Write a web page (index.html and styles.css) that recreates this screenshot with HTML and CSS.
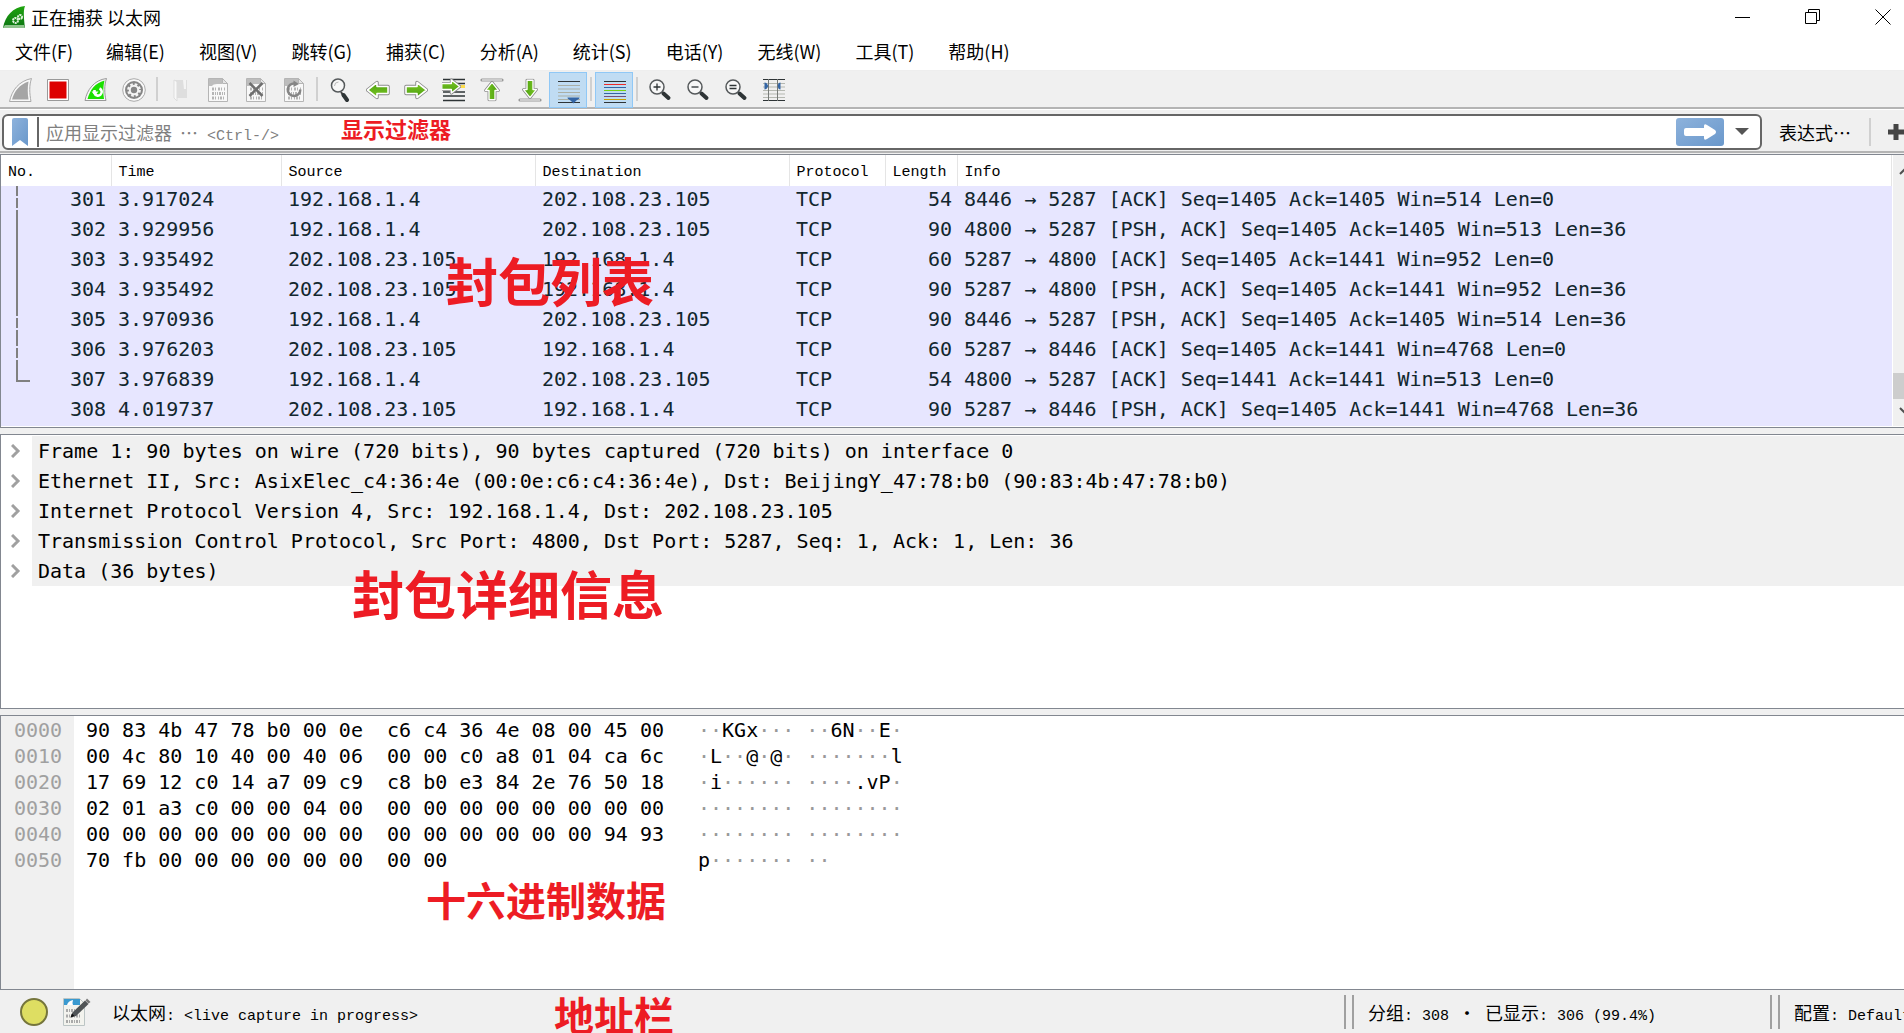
FILE: index.html
```html
<!DOCTYPE html>
<html lang="zh-CN">
<head>
    <meta charset="UTF-8">
    <meta name="viewport" content="width=device-width, initial-scale=1.0">
    <title>正在捕获 以太网</title>
    <link rel="stylesheet" href="styles.css">
</head>
<body>
    <!-- shared icon shapes -->
    <svg class="defs" width="0" height="0" aria-hidden="true">
        <defs>
            <linearGradient id="greenFin" x1="0" y1="0" x2="0" y2="1">
                <stop offset="0" stop-color="#1fa50f"/>
                <stop offset="1" stop-color="#0c7413"/>
            </linearGradient>
            <linearGradient id="greenArrow" x1="0" y1="0" x2="0" y2="1">
                <stop offset="0" stop-color="#7cc727"/>
                <stop offset="1" stop-color="#4a9e0c"/>
            </linearGradient>
            <linearGradient id="blueFill" x1="0" y1="0" x2="1" y2="1">
                <stop offset="0" stop-color="#8db2dc"/>
                <stop offset="1" stop-color="#6a98cb"/>
            </linearGradient>
            <symbol id="arrow" viewBox="0 0 24 24">
                <path d="M2 8.500h11V4.500l9.500 7.500-9.500 7.500v-4H2z" fill="none" stroke="#8b8b8b" stroke-width="3.500" stroke-linejoin="round"/>
                <path d="M2 8.500h11V4.500l9.500 7.500-9.500 7.500v-4H2z" fill="url(#greenArrow)" stroke="#fff" stroke-width="1.600" stroke-linejoin="round"/>
            </symbol>
            <symbol id="lens" viewBox="0 0 24 24">
                <path d="M13 13l3 3" stroke="#444" stroke-width="2"/>
                <path d="M15.500 15.500l5 4.500" stroke="#2e3436" stroke-width="4" stroke-linecap="round"/>
                <circle cx="9" cy="9" r="7" fill="#f7f7f7" stroke="#55595b" stroke-width="1.500"/>
            </symbol>
            <symbol id="page" viewBox="0 0 24 24">
                <path d="M2.500 .5h14l5 5v18h-19z" fill="#f8f8f8" stroke="#b5b5b5"/>
                <path d="M3 1h13v5H11q-4 0-5 2H3z" fill="#bdbdbd"/>
                <path d="M16.500 .5v5h5z" fill="#e4e4e4" stroke="#b5b5b5"/>
                <path d="M6 11h13" stroke="#b5b5b5" stroke-width="3" stroke-dasharray="2 1 1 2"/>
                <path d="M6 15.500h13" stroke="#b5b5b5" stroke-width="3" stroke-dasharray="2 1 1 1 1 1"/>
                <path d="M6 20h13" stroke="#b5b5b5" stroke-width="3" stroke-dasharray="2 1 1 2 1 1"/>
            </symbol>
        </defs>
    </svg>

    <div class="window">
        <header class="titlebar">
            <svg class="app-icon" viewBox="0 0 24 24">
                <path d="M1 23C3 11 11 2 23 1c-2 5-1 13 0 22z" fill="url(#greenFin)"/>
                <path d="M1 23c1-2 2-3 2-3h19l1 3z" fill="#8fc48d"/>
                <g fill="none" stroke="#dff3dc" stroke-width="2" stroke-dasharray="2 .6">
                    <circle cx="13.500" cy="15.500" r="2.500"/>
                    <circle cx="18" cy="12" r="2"/>
                </g>
            </svg>
            <h1>正在捕获 以太网</h1>
            <div class="window-controls">
                <button type="button" aria-label="最小化"><svg width="16" height="16"><path d="M0 8.500h15"/></svg></button>
                <button type="button" aria-label="还原"><svg width="16" height="16"><path d="M.5 3.500h11v11H.5zM3.500 3.500v-3h11v11h-3"/></svg></button>
                <button type="button" aria-label="关闭"><svg width="16" height="16"><path d="M.5.5l15 15M15.500.5l-15 15"/></svg></button>
            </div>
        </header>

        <nav class="menubar">
            <button type="button">文件(F)</button>
            <button type="button">编辑(E)</button>
            <button type="button">视图(V)</button>
            <button type="button">跳转(G)</button>
            <button type="button">捕获(C)</button>
            <button type="button">分析(A)</button>
            <button type="button">统计(S)</button>
            <button type="button">电话(Y)</button>
            <button type="button">无线(W)</button>
            <button type="button">工具(T)</button>
            <button type="button">帮助(H)</button>
        </nav>

        <div class="toolbar">
            <button type="button" aria-label="开始捕获">
                <svg viewBox="0 0 24 24"><path d="M1.500 23.500C4 12 11 3 23.500 .5c-2.500 7-2 15-.5 23z" fill="#f8f8f8" stroke="#aaa"/><path d="M4 21.500C6.500 13 11.500 6.500 20.500 3.500c-1 6-1 12 0 18z" fill="#a5a5a5"/></svg>
            </button>
            <button type="button" aria-label="停止捕获">
                <svg viewBox="0 0 24 24"><path d="M1.500 1.500h21v21h-21z" fill="#fff" stroke="#999"/><path d="M3.500 3.500h17v17h-17z" fill="#d00"/></svg>
            </button>
            <button type="button" aria-label="重新开始捕获">
                <svg viewBox="0 0 24 24"><path d="M1 22.500C3 12 10 2 22.500.5c-2.500 7-2 15-.5 22z" fill="#f8f8f8" stroke="#999"/><path d="M3.500 21C6 12 11 5 20.500 2.500c-1.500 6-1.500 12-.5 18.500z" fill="#1be000"/><path d="M10.500 12v3a3.700 3.700 0 1 0 5-4.500" fill="none" stroke="#fff" stroke-width="2.600"/><path d="M7.500 13.500h7l-3.500 4z" fill="#fff"/></svg>
            </button>
            <button type="button" aria-label="捕获选项">
                <svg viewBox="0 0 24 24"><circle cx="12" cy="12" r="11.300" fill="#fafafa" stroke="#aaa"/><circle cx="12" cy="12" r="9" fill="#868686"/><circle cx="12" cy="12" r="5.700" fill="none" stroke="#f4f4f4" stroke-width="2.400" stroke-dasharray="2.600 1.877"/><circle cx="12" cy="12" r="4.200" fill="none" stroke="#f4f4f4" stroke-width="2"/></svg>
            </button>
            <span class="separator"></span>
            <button type="button" aria-label="打开">
                <svg viewBox="0 0 24 24"><path d="M6 2h13v18H8z" fill="#dedede"/><path d="M6 2l3 1.500V23l-3-3z" fill="#f8f8f8" stroke="#ddd"/><path d="M15 2h3v9h-2z" fill="#f4f4f4"/></svg>
            </button>
            <button type="button" aria-label="保存"><svg viewBox="0 0 24 24"><use href="#page"/></svg></button>
            <button type="button" aria-label="关闭文件">
                <svg viewBox="0 0 24 24"><use href="#page"/><path d="M5.500 5l13 13M18.500 5l-13 13" stroke="#6e6e6e" stroke-width="2.500"/></svg>
            </button>
            <button type="button" aria-label="重新加载">
                <svg viewBox="0 0 24 24"><use href="#page"/><path d="M13 5.500a6.300 6.300 0 1 0 5.300 6" fill="none" stroke="#858585" stroke-width="2.500"/><path d="M11.500 2.500v6.500l5.500-3z" fill="#858585"/></svg>
            </button>
            <span class="separator"></span>
            <button type="button" aria-label="查找">
                <svg viewBox="0 0 24 24"><path d="M13 14l2 3" stroke="#444" stroke-width="2"/><path d="M15.500 17l3.500 5" stroke="#2e3436" stroke-width="4" stroke-linecap="round"/><circle cx="10" cy="7.500" r="6.500" fill="#f7f7f7" stroke="#55595b" stroke-width="1.500"/><path d="M6.500 8a4 4 0 0 1 4-4" fill="none" stroke="#bbb"/></svg>
            </button>
            <button type="button" aria-label="上一个分组"><svg class="turn-left" viewBox="0 0 24 24"><use href="#arrow"/></svg></button>
            <button type="button" aria-label="下一个分组"><svg viewBox="0 0 24 24"><use href="#arrow"/></svg></button>
            <button type="button" aria-label="转到分组">
                <svg viewBox="0 0 24 24"><path d="M1 1.500h22M1 5.500h22M1 14h22M1 18h22M1 22.500h22" stroke="#2e3436" stroke-width="1.300"/><path d="M17 7h6v3h-6z" fill="#fcdc4c"/><svg x="-2" y="-2" width="21" height="21"><use href="#arrow"/></svg></svg>
            </button>
            <button type="button" aria-label="首个分组">
                <svg viewBox="0 0 24 24"><path d="M2 2h20" stroke="#999" stroke-width="3.200" stroke-linecap="round"/><path d="M2 2h20" stroke="#fff"/><g transform="matrix(0 -.85 .85 0 1.800 23.500)"><use href="#arrow" width="24" height="24"/></g></svg>
            </button>
            <button type="button" aria-label="最新分组">
                <svg viewBox="0 0 24 24"><path d="M2 22h20" stroke="#999" stroke-width="3.200" stroke-linecap="round"/><path d="M2 22h20" stroke="#fff"/><g transform="matrix(0 .85 -.85 0 22.200 .5)"><use href="#arrow" width="24" height="24"/></g></svg>
            </button>
            <button type="button" class="checked" aria-label="自动滚动" aria-pressed="true">
                <svg viewBox="0 0 24 24"><path d="M1 1.500h22M1 22.500h22" stroke="#2e3436"/><path d="M1 5.500h22M1 9h22M1 12.500h22M1 16h22M1 19.500h22" stroke="#aaafa6"/><path d="M10.500 17.500h12c0 2-3 2-6 6-3-4-6-4-6-6z" fill="#3465a4"/></svg>
            </button>
            <span class="separator"></span>
            <button type="button" class="checked" aria-label="着色" aria-pressed="true">
                <svg viewBox="0 0 24 24"><path d="M1 1.500h22M1 22.500h22" stroke="#2e3436"/><path d="M1 4.500h22" stroke="#ef2929"/><path d="M1 7.500h22" stroke="#3465a4"/><path d="M1 10.500h22" stroke="#73d216"/><path d="M1 13.500h22" stroke="#3465a4"/><path d="M1 16.500h22" stroke="#75507b"/><path d="M1 19.500h22" stroke="#c4a000"/></svg>
            </button>
            <span class="separator"></span>
            <button type="button" aria-label="放大"><svg viewBox="0 0 24 24"><use href="#lens"/><path d="M5.500 9h7M9 5.500v7" stroke="#2e3436" stroke-width="1.300"/></svg></button>
            <button type="button" aria-label="缩小"><svg viewBox="0 0 24 24"><use href="#lens"/><path d="M5.500 9h7" stroke="#2e3436" stroke-width="1.300"/></svg></button>
            <button type="button" aria-label="正常大小"><svg viewBox="0 0 24 24"><use href="#lens"/><path d="M5.500 7.500h7M5.500 10.500h7" stroke="#2e3436" stroke-width="1.300"/></svg></button>
            <button type="button" aria-label="调整列宽">
                <svg viewBox="0 0 24 24"><path d="M1 1.500h22M1 22.500h22" stroke="#2e3436"/><path d="M1 5.500h22M1 9h22M1 12.500h22M1 16h22M1 19.500h22" stroke="#b5b8b1"/><path d="M6.500 1v22M15.500 1v22" stroke="#777b78"/><path d="M2.500 4.500c3 0 3 3 4 3.500-1 .5-1 3.500-4 3.500zM18.500 4.500c-3 0-2 3-3 3.500 1 .5 0 3.500 3 3.500z" fill="#3465a4"/></svg>
            </button>
        </div>

        <div class="filterbar">
            <form class="filter">
                <button type="button" class="bookmark" aria-label="书签"><svg width="16" height="28"><path d="M2 0h12a2 2 0 0 1 2 2v26l-8-6-8 6V2a2 2 0 0 1 2-2z" fill="url(#blueFill)"/></svg></button>
                <div class="filter-field">
                    <input type="text" id="filter" autocomplete="off">
                    <label for="filter">应用显示过滤器 <span class="dots">…</span> <span class="latin">&lt;Ctrl-/&gt;</span></label>
                    <strong class="note note-small">显示过滤器</strong>
                </div>
                <button type="submit" class="apply" aria-label="应用"><svg width="48" height="28"><path d="M10 10h18V8q0-3 3-1l8 5q2 2 0 4l-8 5q-3 2-3-1v-2H10q-2 0-2-2v-4q0-2 2-2z" fill="#fff"/></svg></button>
                <button type="button" class="history" aria-label="历史"><svg width="14" height="8"><path d="M0 0h14L7 7z" fill="#555"/></svg></button>
            </form>
            <button type="button" class="expression">表达式…</button>
            <span class="separator"></span>
            <button type="button" class="add" aria-label="添加"><svg width="16" height="16"><path d="M0 8h16M8 0v16" stroke="#444" stroke-width="5"/></svg></button>
        </div>

        <section class="pane packets">
            <table>
                <colgroup>
                    <col class="c-no"><col class="c-time"><col class="c-addr"><col class="c-addr"><col class="c-proto"><col class="c-len"><col>
                </colgroup>
                <thead>
                    <tr><th>No.</th><th>Time</th><th>Source</th><th>Destination</th><th>Protocol</th><th>Length</th><th>Info</th></tr>
                </thead>
                <tbody>
                    <tr><td>301</td><td>3.917024</td><td>192.168.1.4</td><td>202.108.23.105</td><td>TCP</td><td>54</td><td>8446 → 5287 [ACK] Seq=1405 Ack=1405 Win=514 Len=0</td></tr>
                    <tr><td>302</td><td>3.929956</td><td>192.168.1.4</td><td>202.108.23.105</td><td>TCP</td><td>90</td><td>4800 → 5287 [PSH, ACK] Seq=1405 Ack=1405 Win=513 Len=36</td></tr>
                    <tr><td>303</td><td>3.935492</td><td>202.108.23.105</td><td>192.168.1.4</td><td>TCP</td><td>60</td><td>5287 → 4800 [ACK] Seq=1405 Ack=1441 Win=952 Len=0</td></tr>
                    <tr><td>304</td><td>3.935492</td><td>202.108.23.105</td><td>192.168.1.4</td><td>TCP</td><td>90</td><td>5287 → 4800 [PSH, ACK] Seq=1405 Ack=1441 Win=952 Len=36</td></tr>
                    <tr><td>305</td><td>3.970936</td><td>192.168.1.4</td><td>202.108.23.105</td><td>TCP</td><td>90</td><td>8446 → 5287 [PSH, ACK] Seq=1405 Ack=1405 Win=514 Len=36</td></tr>
                    <tr><td>306</td><td>3.976203</td><td>202.108.23.105</td><td>192.168.1.4</td><td>TCP</td><td>60</td><td>5287 → 8446 [ACK] Seq=1405 Ack=1441 Win=4768 Len=0</td></tr>
                    <tr><td>307</td><td>3.976839</td><td>192.168.1.4</td><td>202.108.23.105</td><td>TCP</td><td>54</td><td>4800 → 5287 [ACK] Seq=1441 Ack=1441 Win=513 Len=0</td></tr>
                    <tr><td>308</td><td>4.019737</td><td>202.108.23.105</td><td>192.168.1.4</td><td>TCP</td><td>90</td><td>5287 → 8446 [PSH, ACK] Seq=1405 Ack=1441 Win=4768 Len=36</td></tr>
                </tbody>
            </table>
            <div class="scrollbar">
                <svg width="11" height="8"><path d="M7 7l6-6" /></svg>
                <span class="thumb"></span>
                <svg width="11" height="8"><path d="M7 1l6 6"/></svg>
            </div>
            <!-- conversation line -->
            <svg class="related" width="16" height="200"><path d="M2 0v10M2 12v10M2 24v106M2 132v10M2 144v16M2 162v10M2 174v21h13"/></svg>
            <strong class="note note-list">封包列表</strong>
        </section>

        <section class="pane details">
            <ul>
                <li><button type="button" aria-label="展开"><svg width="10" height="14"><path d="M1 1l6 6-6 6"/></svg></button><span>Frame 1: 90 bytes on wire (720 bits), 90 bytes captured (720 bits) on interface 0</span></li>
                <li><button type="button" aria-label="展开"><svg width="10" height="14"><path d="M1 1l6 6-6 6"/></svg></button><span>Ethernet II, Src: AsixElec_c4:36:4e (00:0e:c6:c4:36:4e), Dst: BeijingY_47:78:b0 (90:83:4b:47:78:b0)</span></li>
                <li><button type="button" aria-label="展开"><svg width="10" height="14"><path d="M1 1l6 6-6 6"/></svg></button><span>Internet Protocol Version 4, Src: 192.168.1.4, Dst: 202.108.23.105</span></li>
                <li><button type="button" aria-label="展开"><svg width="10" height="14"><path d="M1 1l6 6-6 6"/></svg></button><span>Transmission Control Protocol, Src Port: 4800, Dst Port: 5287, Seq: 1, Ack: 1, Len: 36</span></li>
                <li><button type="button" aria-label="展开"><svg width="10" height="14"><path d="M1 1l6 6-6 6"/></svg></button><span>Data (36 bytes)</span></li>
            </ul>
            <strong class="note note-details">封包详细信息</strong>
        </section>

        <section class="pane hex">
<pre class="offsets">0000
0010
0020
0030
0040
0050</pre>
<pre class="bytes">90 83 4b 47 78 b0 00 0e  c6 c4 36 4e 08 00 45 00
00 4c 80 10 40 00 40 06  00 00 c0 a8 01 04 ca 6c
17 69 12 c0 14 a7 09 c9  c8 b0 e3 84 2e 76 50 18
02 01 a3 c0 00 00 04 00  00 00 00 00 00 00 00 00
00 00 00 00 00 00 00 00  00 00 00 00 00 00 94 93
70 fb 00 00 00 00 00 00  00 00</pre>
<pre class="ascii">··<b>KGx</b>··· ··<b>6N</b>··<b>E</b>·
·<b>L</b>··<b>@</b>·<b>@</b>· ·······<b>l</b>
·<b>i</b>······ ····<b>.vP</b>·
········ ········
········ ········
<b>p</b>······· ··</pre>
            <strong class="note note-hex">十六进制数据</strong>
        </section>

        <footer class="statusbar">
            <button type="button" class="expert" aria-label="专家信息"></button>
            <button type="button" class="comment" aria-label="捕获文件属性">
                <svg width="28" height="28">
                    <path d="M.5.5h16l5 5v22H.5z" fill="#f3f3ee" stroke="#bcc5c5"/>
                    <path d="M1 1h16v6H1z" fill="#3a9ad0"/>
                    <path d="M4 7q1-4 6-5-1 3 0 5z" fill="#fff"/>
                    <path d="M3 12.500h15M3 18h15M3 23.500h15" stroke="#aaa" stroke-width="3" stroke-dasharray="2 1 1 1"/>
                    <path d="M7.500 19.500l2-5L22 2.500l3.500 3.500L13 18z" fill="#505456"/>
                    <path d="M7.500 19.500l1.500-4 2.500 2.500z" fill="#111"/>
                    <path d="M22.500 2.500l1.500-2 3.500 3.500-2 1.500z" fill="#777"/>
                </svg>
            </button>
            <span class="status-main">以太网<span class="latin">: &lt;live capture in progress&gt;</span></span>
            <span class="status-packets">分组<span class="latin">: 308 </span><i>•</i><span class="latin"> </span>已显示<span class="latin">: 306 (99.4%)</span></span>
            <span class="status-profile">配置<span class="latin">: Default</span></span>
            <strong class="note note-status">地址栏</strong>
        </footer>
    </div>
</body>
</html>
```

FILE: styles.css
```css
:root {
    --bar: #f0f0f0;
    --frame: #828790;
    --row: #e7e6ff;
    --note: #ed1c24;
    --ui: "Noto Sans CJK SC", sans-serif;
    --mono: "DejaVu Sans Mono", monospace;
    --header: "Liberation Mono", monospace;
}

* {
    box-sizing: border-box;
}

body {
    margin: 0;
    font-family: var(--ui);
    font-size: 18px;
    color: #000;
    background: #fff;
}

button {
    display: flex;
    align-items: center;
    justify-content: center;
    margin: 0;
    padding: 0;
    border: none;
    background: none;
    font: inherit;
    color: inherit;
}

svg {
    display: block;
}

.defs {
    position: absolute;
}

.latin {
    font-family: var(--header);
    font-size: 15px;
    line-height: 1;
    white-space: pre;
}

.window {
    display: flex;
    flex-direction: column;
    height: 100vh;
    overflow: hidden;
    background: var(--bar);
}

/* title and menu */
.titlebar {
    display: flex;
    align-items: center;
    flex: none;
    height: 34px;
    padding-left: 2px;
    background: #fff;
}

.app-icon {
    width: 24px;
    height: 24px;
}

h1 {
    flex: 1;
    margin: 0 0 0 5px;
    font-size: 18px;
    font-weight: normal;
    line-height: 32px;
}

.window-controls {
    display: flex;
    margin-right: -14px;
}

.window-controls button {
    width: 70px;
    height: 34px;
}

.window-controls path {
    fill: none;
    stroke: #000;
}

.menubar {
    display: flex;
    align-items: flex-start;
    flex: none;
    height: 37px;
    padding-top: 1px;
    border-bottom: 1px solid #eee;
    background: #fff;
}

.menubar button {
    padding: 0 19px 0 15px;
    line-height: 32px;
}

.menubar button + button {
    padding-right: 20px;
    padding-left: 14px;
}

/* toolbar */
.toolbar {
    display: flex;
    flex: none;
    height: 38px;
    padding: 1px 0 0 1px;
    border-bottom: 2px solid #b4b4b4;
}

.toolbar button {
    width: 38px;
    height: 36px;
}

.toolbar button > svg {
    width: 24px;
    height: 24px;
}

.toolbar .turn-left {
    transform: rotate(180deg);
}

.toolbar .checked {
    border: 1px solid #90c8f6;
    background: #c0dcf3;
}

.toolbar .checked svg {
    margin: 4px 0 0 2px;
}

.separator {
    width: 2px;
    height: 24px;
    margin: 5px 3px;
    background: #d0d0d0;
}

/* display filter */
.filterbar {
    display: flex;
    align-items: center;
    flex: none;
    height: 44px;
    margin-bottom: 1px;
    padding: 4px 0 2px 2px;
    border-top: 1px solid #fff;
    border-bottom: 2px solid #b4b4b4;
}

.filter {
    display: flex;
    align-items: center;
    flex: 1;
    height: 36px;
    border: 2px solid #666;
    border-radius: 6px;
    background: #fff;
}

.bookmark {
    width: 35px;
    height: 30px;
    padding-right: 2px;
    border-right: 2px solid #666;
}

.filter-field {
    position: relative;
    flex: 1;
    height: 32px;
}

.filter-field input {
    width: 100%;
    height: 32px;
    padding: 0 7px;
    border: none;
    outline: none;
    background: none;
    font: 15px var(--header);
}

.filter-field label {
    position: absolute;
    left: 7px;
    top: 0;
    line-height: 32px;
    white-space: pre;
    color: #808080;
    pointer-events: none;
}

.filter-field .dots {
    margin: 0 5px 0 4px;
}

.apply {
    height: 28px;
    border-radius: 3px;
    background: linear-gradient(to bottom right, #8db2dc, #6a98cb);
}

.history {
    width: 36px;
    height: 28px;
}

.expression {
    padding: 0 15px 0 17px;
    line-height: 28px;
    white-space: nowrap;
}

.filterbar .separator {
    height: 28px;
    margin: 0 17px 0 3px;
}

/* panes */
.pane {
    position: relative;
    flex: 1 1 0;
    min-height: 0;
    border: 1px solid var(--frame);
    border-right: none;
    background: #fff;
    font-family: var(--mono);
    font-size: 20px;
}

.pane + .pane {
    margin-top: 6px;
}

.packets {
    display: flex;
    flex: none;
    padding-bottom: 1px;
}

table {
    flex: 1;
    table-layout: fixed;
    border-collapse: collapse;
    width: 100%;
}

.c-no { width: 110px; }
.c-time { width: 170px; }
.c-addr { width: 254px; }
.c-proto { width: 96px; }
.c-len { width: 72px; }

th {
    height: 31px;
    padding: 3px 7px 0;
    border-right: 1px solid #e5e5e5;
    text-align: left;
    font: 15px var(--header);
}

td {
    height: 30px;
    padding: 0 5px 4px 7px;
    line-height: 26px;
    white-space: pre;
    background: var(--row);
    color: #12272e;
}

td:nth-child(1),
td:nth-child(6) {
    text-align: right;
}

.scrollbar {
    display: flex;
    flex-direction: column;
    flex: none;
    width: 11px;
    margin-left: 1px;
    padding: 12px 0 11px;
    background: var(--bar);
}

.scrollbar path {
    fill: none;
    stroke: #505050;
    stroke-width: 2;
}

.thumb {
    height: 26px;
    margin: auto 0 8px;
    background: #cdcdcd;
}

.related {
    position: absolute;
    left: 14px;
    top: 31px;
}

.related path {
    fill: none;
    stroke: #808080;
    stroke-width: 2;
}

.details ul {
    margin: 0;
    padding: 1px 0 0;
    list-style: none;
}

.details li {
    display: flex;
    line-height: 30px;
    white-space: pre;
}

.details li button {
    width: 31px;
    padding-right: 1px;
}

.details li path {
    fill: none;
    stroke: #a0a0a0;
    stroke-width: 3;
}

.details li span {
    flex: 1;
    padding-left: 6px;
    background: var(--bar);
}

/* slightly taller than the details pane */
.hex {
    display: flex;
    flex-basis: 2px;
}

.hex pre {
    margin: 0;
    padding-top: 1px;
    font-family: var(--mono);
    line-height: 26px;
}

.offsets {
    width: 73px;
    padding-left: 13px;
    background: var(--bar);
    color: #a0a0a0;
}

.bytes {
    padding-left: 12px;
}

.ascii {
    padding-left: 34px;
    color: #999;
}

.ascii b {
    font-weight: normal;
    color: #000;
}

/* status bar */
.statusbar {
    position: relative;
    display: flex;
    align-items: center;
    flex: none;
    height: 43px;
    padding-left: 20px;
    line-height: 34px;
    white-space: pre;
}

.expert {
    width: 28px;
    height: 28px;
    border: 2px solid #75753c;
    border-radius: 50%;
    background: #dede62;
}

.comment {
    margin-left: 15px;
}

.status-main {
    flex: 1;
    margin-left: 21px;
}

.status-packets,
.status-profile {
    height: 34px;
    padding-left: 22px;
    border-left: 2px solid #a0a0a0;
    background: linear-gradient(#a0a0a0, #a0a0a0) 6px 0 / 2px 100% no-repeat;
}

.status-packets {
    width: 426px;
}

.status-packets i {
    display: inline-block;
    width: 18px;
    text-align: center;
    font-style: normal;
}

.status-profile {
    width: 134px;
    overflow: hidden;
}

/* red captions */
.note {
    position: absolute;
    font-family: var(--ui);
    font-weight: bold;
    line-height: 1;
    white-space: nowrap;
    color: var(--note);
}

.note-small {
    left: 302px;
    top: 1px;
    font-size: 22px;
}

.note-list {
    left: 445px;
    top: 99px;
    font-size: 52px;
}

.note-details {
    left: 351px;
    top: 132px;
    font-size: 52px;
}

.note-hex {
    left: 425px;
    top: 163px;
    font-size: 40px;
}

.note-status {
    left: 554px;
    top: 4px;
    font-size: 40px;
}
```
